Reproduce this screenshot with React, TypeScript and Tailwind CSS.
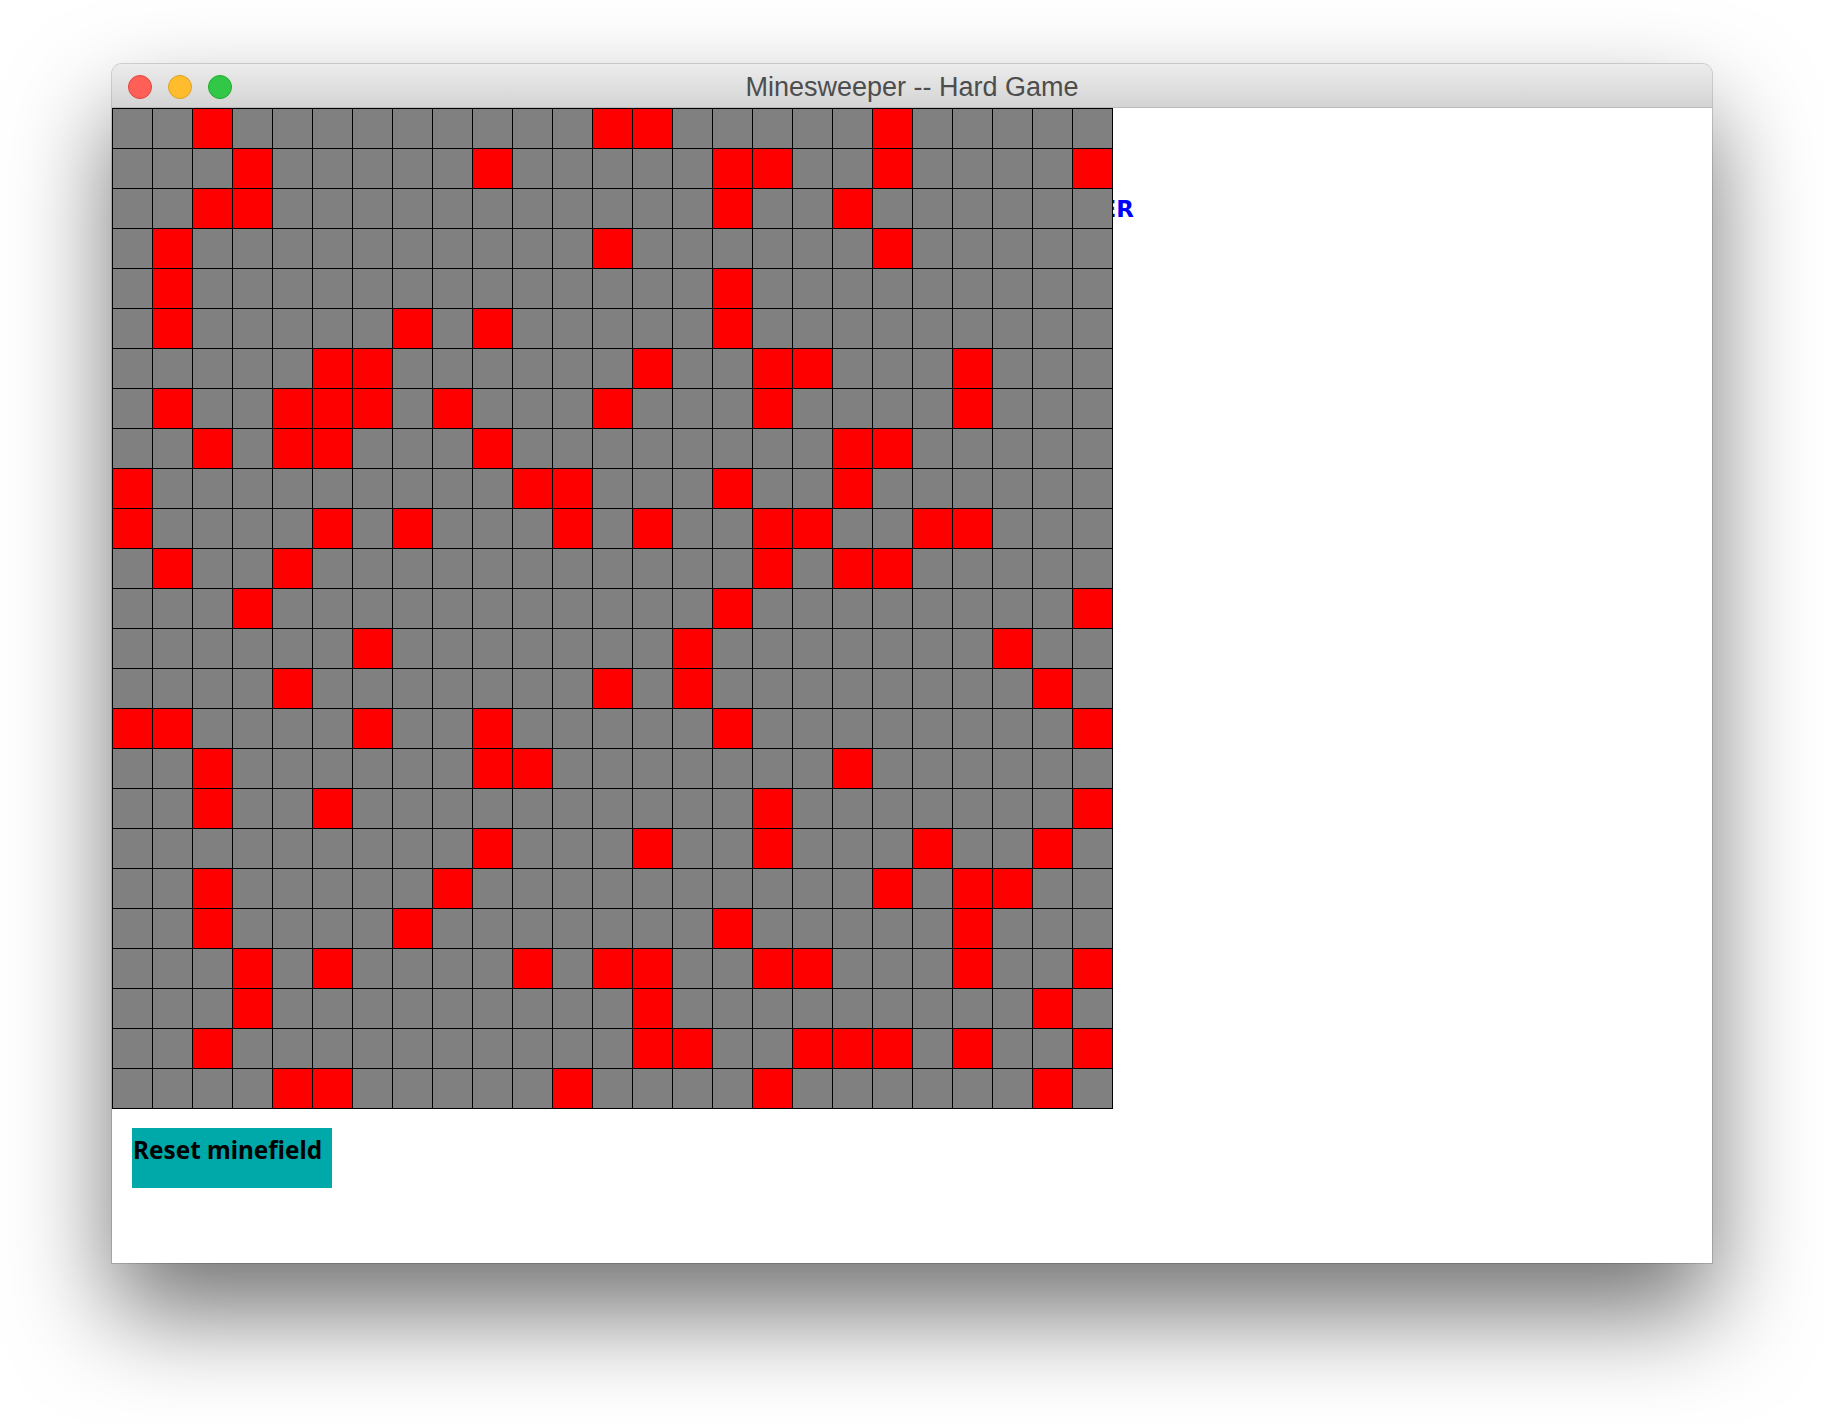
import React from "react";

// 25 x 25 field, "x" marks a revealed mine
const FIELD = [
  "..x.........xx.....x.....",
  "...x.....x.....xx..x....x",
  "..xx...........x..x......",
  ".x..........x......x.....",
  ".x.............x.........",
  ".x.....x.x.....x.........",
  ".....xx......x..xx...x...",
  ".x..xxx.x...x...x....x...",
  "..x.xx...x........xx.....",
  "x.........xx...x..x......",
  "x....x.x...x.x..xx..xx...",
  ".x..x...........x.xx.....",
  "...x...........x........x",
  "......x.......x.......x..",
  "....x.......x.x........x.",
  "xx....x..x.....x........x",
  "..x......xx.......x......",
  "..x..x..........x.......x",
  ".........x...x..x...x..x.",
  "..x.....x..........x.xx..",
  "..x....x.......x.....x...",
  "...x.x....x.xx..xx...x..x",
  "...x.........x.........x.",
  "..x..........xx..xxx.x..x",
  "....xx.....x....x......x.",
];

function TrafficLights() {
  return (
    <div className="flex items-center gap-[16px] pl-[16px]">
      <span className="h-[24px] w-[24px] rounded-full border border-[#e0443e] bg-[#ff5f57]" />
      <span className="h-[24px] w-[24px] rounded-full border border-[#dea123] bg-[#ffbd2e]" />
      <span className="h-[24px] w-[24px] rounded-full border border-[#1dad2b] bg-[#33c748]" />
    </div>
  );
}

function Minefield() {
  return (
    <div className="relative z-10 grid w-fit grid-cols-[repeat(25,39px)] gap-px bg-black p-px">
      {FIELD.flatMap((row, r) =>
        row.split("").map((cell, c) => (
          <div
            key={`${r}-${c}`}
            className={cell === "x" ? "h-[39px] bg-[#ff0000]" : "h-[39px] bg-[#808080]"}
          />
        ))
      )}
    </div>
  );
}

export default function App() {
  return (
    <div className="min-h-[1424px] w-[1824px] bg-white pl-[112px] pt-[64px]">
      <div className="w-[1600px] rounded-t-[10px] shadow-[0_50px_100px_0_rgba(0,0,0,0.55)] ring-1 ring-black/15">
        {/* title bar */}
        <div className="grid h-[44px] grid-cols-[1fr_auto_1fr] items-center rounded-t-[10px] border-b border-[#b9b9b9] bg-gradient-to-b from-[#ececec] to-[#d4d4d4] pt-[2px]">
          <TrafficLights />
          <span
            className="text-[27px] leading-[42px] text-[#4d4d4d]"
            style={{ fontFamily: '"Liberation Sans", Arial, sans-serif' }}
          >
            Minesweeper -- Hard Game
          </span>
          <span />
        </div>

        {/* window content */}
        <div className="relative flex h-[1155px] flex-col bg-white">
          <span
            className="absolute left-0 top-[90px] w-[1022px] text-right text-[23px] font-bold leading-none text-[#0000ff]"
            style={{ fontFamily: '"DejaVu Sans", Verdana, sans-serif' }}
          >
            MINESWEEPER
          </span>
          <Minefield />
          <button
            className="ml-[20px] mt-[19px] flex h-[60px] w-[200px] items-start bg-[#00a9a9] pl-[1px] pt-[5px] text-[24.3px] font-bold leading-[34px] text-black"
            style={{ fontFamily: '"Noto Sans", sans-serif' }}
          >
            Reset minefield
          </button>
        </div>
      </div>
    </div>
  );
}
